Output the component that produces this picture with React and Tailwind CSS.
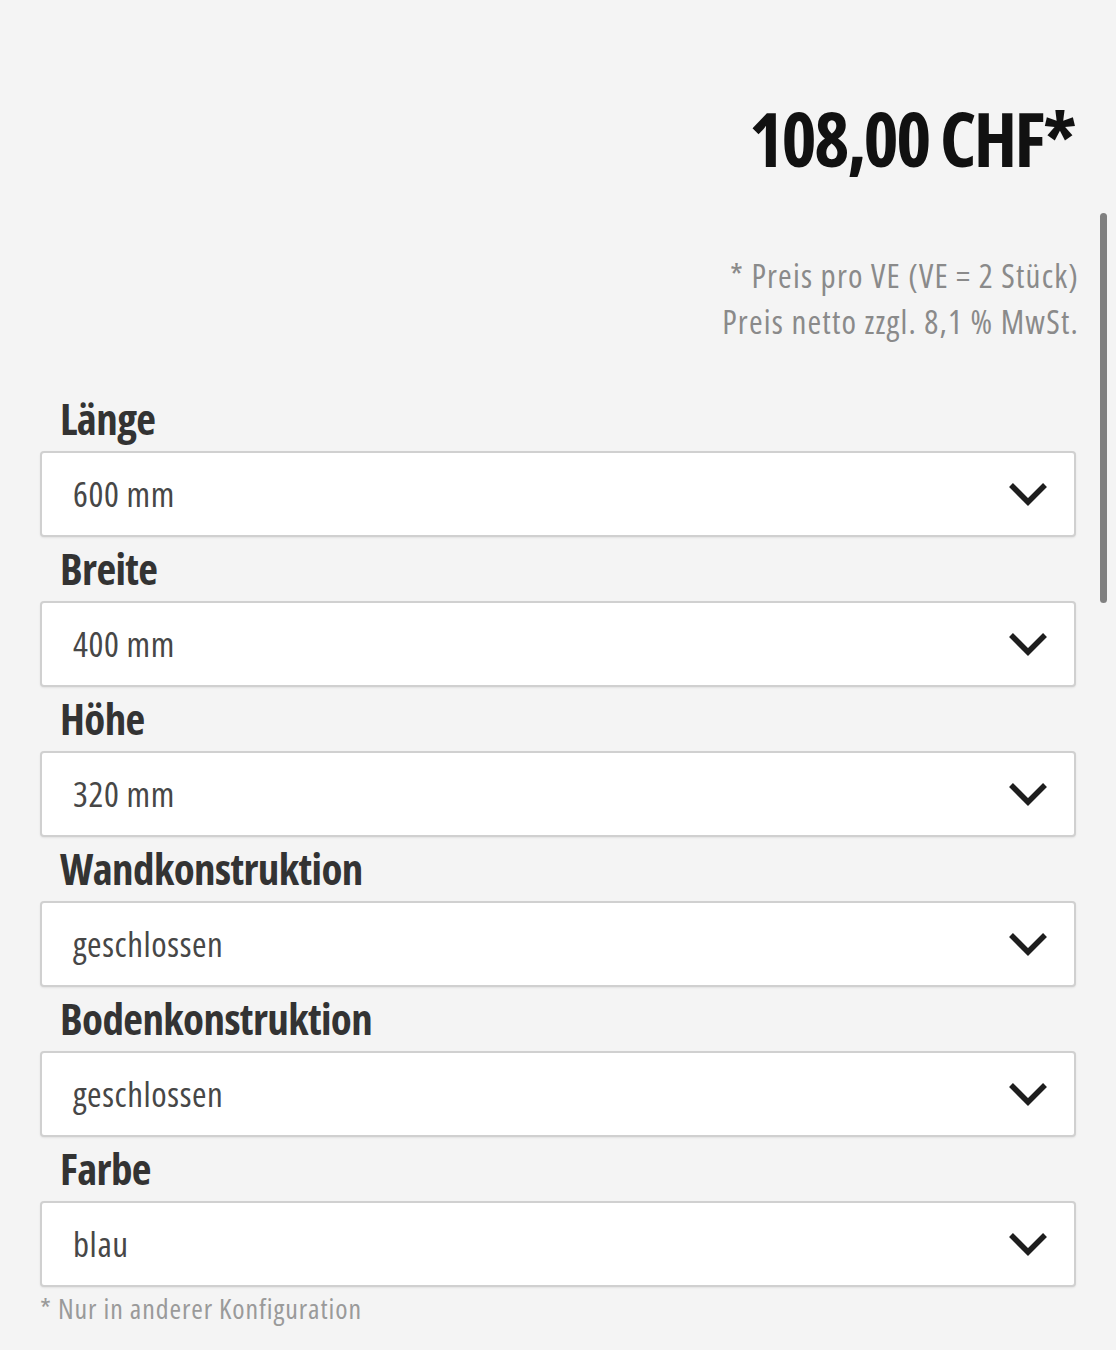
const fields = [
  { label: "Länge", value: "600 mm" },
  { label: "Breite", value: "400 mm" },
  { label: "Höhe", value: "320 mm" },
  { label: "Wandkonstruktion", value: "geschlossen" },
  { label: "Bodenkonstruktion", value: "geschlossen" },
  { label: "Farbe", value: "blau" },
];

function Chevron() {
  return (
    <svg width="40" height="26" viewBox="0 0 40 26" fill="none" className="shrink-0">
      <polyline points="3,4 20,21 37,4" stroke="#1e1e1e" strokeWidth="5.5" strokeLinecap="butt" strokeLinejoin="miter" />
    </svg>
  );
}

export default function App() {
  return (
    <div className="relative min-h-[1350px] w-full bg-[#f4f4f4] font-['Open_Sans',sans-serif] px-[40px] pt-[101px]">
      <div className="absolute left-[1100px] top-[213px] h-[390px] w-[7px] rounded-full bg-[#808080]" />

      <div className="pr-[2px] text-right text-[75px] leading-[75px] font-bold text-[#111] [font-stretch:75%] tracking-[-2.5px]">
        108,00 CHF*
      </div>

      <div className="-mr-[3px] mt-[77px] text-right text-[33px] leading-[46px] text-[#8a8a8a] [font-stretch:75%] tracking-[1.2px]">
        <div>* Preis pro VE (VE = 2 Stück)</div>
        <div>Preis netto zzgl. 8,1 % MwSt.</div>
      </div>

      <div className="mt-[42px] flex flex-col">
        {fields.map((f) => (
          <div key={f.label} className="flex flex-col">
            <div className="h-[64px] pl-[20px] text-[43px] leading-[64px] font-bold text-[#333] [font-stretch:75%] tracking-[-0.6px]">
              {f.label}
            </div>
            <div className="flex h-[86px] items-center justify-between rounded-[4px] border-2 border-[#d0d0d0] bg-white pl-[31px] pr-[26px] shadow-[0_1px_2px_rgba(0,0,0,0.08)]">
              <span className="text-[35px] text-[#474747] [font-stretch:75%] tracking-[0.6px]">{f.value}</span>
              <Chevron />
            </div>
          </div>
        ))}
      </div>

      <div className="text-[28px] leading-[42px] text-[#9a9a9a] [font-stretch:75%] tracking-[0.9px]">
        * Nur in anderer Konfiguration
      </div>
    </div>
  );
}
